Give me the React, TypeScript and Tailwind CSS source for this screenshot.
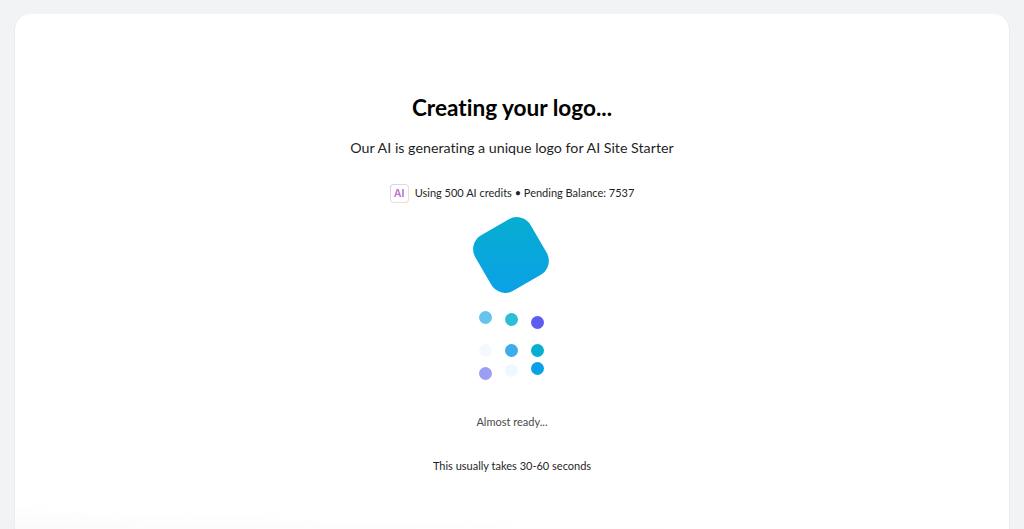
import React from 'react';

// staggered loader dots, 3 x 3
const dots = [
  { cls: 'bg-[#67c3ee] translate-y-[-2px]' },
  { cls: 'bg-[#2fbcd8]' },
  { cls: 'bg-[#5b5cf0] translate-y-[3px]' },
  { cls: 'bg-[#f3f9fe] translate-y-[5px]' },
  { cls: 'bg-[#3fade9] translate-y-[5px]' },
  { cls: 'bg-[#06aecf] translate-y-[5px]' },
  { cls: 'bg-[#9c9df5] translate-y-[2px]' },
  { cls: 'bg-[#f0f8fe] translate-y-[-1px]' },
  { cls: 'bg-[#0ba0e8] translate-y-[-3px]' },
];

function AiBadge() {
  return (
    <div className="w-[19px] h-[19px] rounded-[4px] p-px bg-gradient-to-br from-[#d9c8f2] via-[#e6dcec] to-[#f3dcb8]">
      <div className="w-full h-full rounded-[3px] bg-white flex items-center justify-center">
        <span className="translate-y-px font-['Inter',sans-serif] text-[10.5px] font-bold leading-none text-transparent bg-clip-text bg-gradient-to-r from-[#c87ac4] to-[#a56fd6]">AI</span>
      </div>
    </div>
  );
}

export default function App() {
  return (
    <div className="h-[529px] overflow-hidden bg-[#f2f3f5] pt-[14px] px-[14px] font-['Lato',sans-serif] [font-variant-ligatures:none]">
      <div className="w-[996px] h-[530px] rounded-t-2xl bg-[linear-gradient(182deg,#ffffff_93%,#f8f8f8_100%)] border-x border-[#ececee] flex flex-col items-center pt-[78px]">
        <h1 className="text-[22.6px] leading-[32px] font-bold text-black">Creating your logo...</h1>
        <p className="mt-[12px] text-[14.25px] leading-[24px] text-[#1f1f1f]">Our AI is generating a unique logo for AI Site Starter</p>
        <div className="mt-[23px] flex items-center gap-[6px] h-[20px]">
          <AiBadge />
          <span className="text-[11px] leading-[20px] text-[#1f1f1f]">Using 500 AI credits • Pending Balance: 7537</span>
        </div>
        <div className="mt-[20px] w-[64px] h-[64px] rounded-[16px] -rotate-[30deg] -translate-x-px bg-[linear-gradient(210deg,#06aecf,#0ba0e8)]" />
        <div className="mt-[26px] grid grid-cols-3 gap-x-[13px] gap-y-[13px] w-[65px] -translate-x-px">
          {dots.map((d, i) => (
            <div key={i} className={`w-[13px] h-[13px] rounded-full ${d.cls}`} />
          ))}
        </div>
        <p className="mt-[34px] text-[11px] leading-[20px] text-[#4a4a4a]">Almost ready...</p>
        <p className="mt-[24px] text-[11px] leading-[20px] text-[#1f1f1f]">This usually takes 30-60 seconds</p>
      </div>
    </div>
  );
}
